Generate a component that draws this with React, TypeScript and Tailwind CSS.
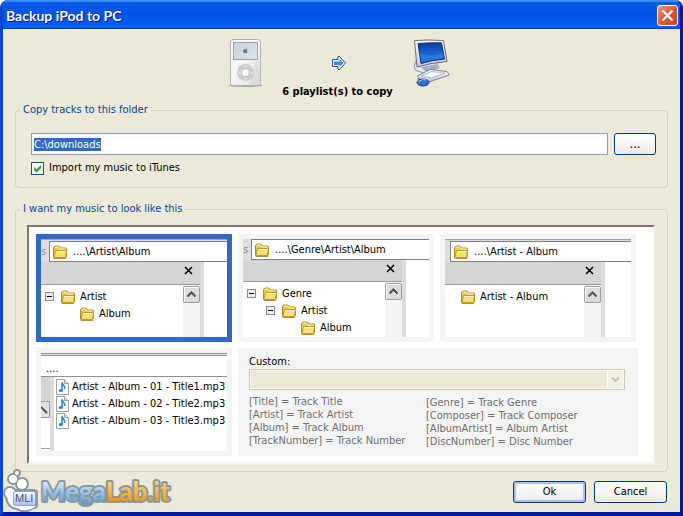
import { useEffect, useRef, useState } from "react";
import type { ReactNode } from "react";

const FolderIcon = () => (
  <svg width="16" height="14" viewBox="0 0 16 14" className="shrink-0">
    <path d="M1.500 12V2.500L3 1h4l1.500 2H14l.5 1v7.500L13 13H2.500z" fill="#efc84a" stroke="#b58a1c" />
    <path d="M2.500 3L3.500 2h3l1.500 2h5.500" fill="none" stroke="#fff3b0" />
    <path d="M3.500 5.500h11l-1 7H2z" fill="#fbe07a" stroke="#c79a25" />
    <path d="M4.500 6.500h9" stroke="#fffbd6" />
    <path d="M1.500 13.500h13" stroke="#8f6c17" opacity=".6" />
  </svg>
);

const IpodIcon = () => (
  <svg width="36" height="50" viewBox="0 0 36 50">
    <defs>
      <linearGradient id="ipodBody" x1="0" y1="0" x2="1" y2="1">
        <stop offset="0" stopColor="#ffffff" />
        <stop offset=".5" stopColor="#f4f4f4" />
        <stop offset="1" stopColor="#dcdcdc" />
      </linearGradient>
      <linearGradient id="ipodScreen" x1="0" y1="0" x2="1" y2="1">
        <stop offset="0" stopColor="#c6cfda" />
        <stop offset="1" stopColor="#dfe5ec" />
      </linearGradient>
    </defs>
    <ellipse cx="17.500" cy="47.500" rx="17" ry="1.500" fill="#a5a294" />
    <rect x="2.500" y="1.500" width="30" height="46" rx="2.500" fill="url(#ipodBody)" stroke="#b3b3b0" />
    <rect x="5.500" y="4.500" width="24" height="17" fill="url(#ipodScreen)" stroke="#98a3b2" />
    <path d="M17.500 11.500c.8-.5 1.600-.3 2 .3-.8.7-.7 1.700.2 2.100-.4 1.100-1.100 1.700-1.800 1.300-.4-.2-.7-.2-1.100 0-1.100.4-2.200-1.600-1.700-3 .4-.9 1.400-1.100 2.400-.7zM17.500 11c0-.8.5-1.400 1.200-1.500 0 .8-.5 1.400-1.200 1.500z" fill="#6c7a8c" />
    <path d="M28 22l4.500 10v15H21z" fill="#d0d0d0" opacity=".45" />
    <circle cx="17.500" cy="34.500" r="8.500" fill="#cbcbcb" />
    <rect x="14.500" y="31.500" width="6" height="6" rx="1.500" fill="#fff" />
    <path d="M10.500 33.500v2M12 33.500v2M23 33.500v2M24.500 33.500v2M16 28.500h3M16 40.500h3" stroke="#f0f0f0" />
  </svg>
);

const ArrowIcon = () => (
  <svg width="16" height="16" viewBox="0 0 16 16">
    <path d="M1.500 4.500H7V1.500h1.500l6 6.500-6 6.500H7v-3H1.500z" fill="#f2f8ff" stroke="#2b4a9e" />
    <path d="M3 6h5.500V4l4 4-4 4v-2H3z" fill="#3c8ae8" />
    <path d="M3 6.500h6.500" stroke="#8fc3ff" />
  </svg>
);

const ComputerIcon = () => (
  <svg width="40" height="50" viewBox="0 0 40 50" className="-ml-[2px]">
    <defs>
      <linearGradient id="pcScreen" x1="0" y1="0" x2="0" y2="1">
        <stop offset="0" stopColor="#0d3a94" />
        <stop offset=".55" stopColor="#1767d6" />
        <stop offset="1" stopColor="#0a44b0" />
      </linearGradient>
      <linearGradient id="pcCase" x1="0" y1="0" x2="0" y2="1">
        <stop offset="0" stopColor="#ffffff" />
        <stop offset="1" stopColor="#c3c8da" />
      </linearGradient>
    </defs>
    <path d="M4 23q-3.500 6 0 9.500l9 3 14-6-3-5z" fill="#dfe2ec" stroke="#8e94a8" />
    <path d="M9 29l17-3-1 4-11 4z" fill="#a6acc0" />
    <path d="M2.500 2.500Q17 1.500 31.500 2.500L35 23.500Q20 24.500 5 29z" fill="url(#pcCase)" stroke="#666c82" />
    <path d="M6 5.500Q18 4.500 29.500 4.800L32.500 21Q20 22 9 25.500z" fill="url(#pcScreen)" stroke="#1a3268" />
    <path d="M8 15q10 5 23 0l1 5.500Q20 21.500 9.500 24.500z" fill="#3fa0ff" opacity=".45" />
    <path d="M5.500 38l12.500-6.500 17 2 2.500 3.500L18 43.500 7 41z" fill="url(#pcCase)" stroke="#7a8096" />
    <path d="M9.500 38l10-4.500 14 1.500-14 5z" fill="#f4f6fb" stroke="#b4bacb" />
    <path d="M6 40q0 2 1 3" fill="none" stroke="#5c6aa0" />
    <ellipse cx="11" cy="44.500" rx="6" ry="3.500" fill="#2f6fd0" stroke="#1b3f8c" />
    <path d="M6.500 43.500q4-3 8-1.500" fill="none" stroke="#a9d0ff" />
  </svg>
);

const MusicFileIcon = () => (
  <svg width="13" height="16" viewBox="0 0 13 16" className="shrink-0">
    <path d="M.5.5h8l4 4v11H.5z" fill="#fdfdfd" stroke="#9aa0a6" />
    <path d="M8.500.5v4h4" fill="#dfe3e8" stroke="#9aa0a6" />
    <path d="M6 3.500v8" stroke="#1787c8" strokeWidth="1.500" />
    <path d="M6 3.500c.5 2.500 3.500 3 2.500 6.500" fill="none" stroke="#1787c8" strokeWidth="1.500" />
    <ellipse cx="4.800" cy="11.500" rx="2" ry="1.600" fill="#1787c8" />
  </svg>
);

const ExpanderIcon = () => (
  <svg width="9" height="9" viewBox="0 0 9 9" className="shrink-0">
    <rect x=".5" y=".5" width="8" height="8" fill="#ececec" stroke="#8c8c8c" />
    <path d="M2 4.500h5" stroke="#000" />
  </svg>
);

const ScrollUpIcon = () => (
  <svg width="17" height="17" viewBox="0 0 17 17" className="block">
    <rect x=".5" y=".5" width="16" height="16" rx="1.500" fill="#dcdcdc" stroke="#9e9e9e" />
    <path d="M1.500 15.500v-14h14" fill="none" stroke="#f8f8f8" />
    <path d="M4.500 10.500l4-4 4 4" fill="none" stroke="#4e5358" strokeWidth="2" />
  </svg>
);

const MegaLabLogo = () => (
  <svg width="180" height="46" viewBox="0 0 180 46" className="block">
    <defs>
      <linearGradient id="megaBlue" x1="0" y1="0" x2="0" y2="1">
        <stop offset=".2" stopColor="#d3eafb" />
        <stop offset=".9" stopColor="#5d9fd8" />
      </linearGradient>
      <linearGradient id="megaOrange" x1="0" y1="0" x2="0" y2="1">
        <stop offset=".2" stopColor="#ffd878" />
        <stop offset=".8" stopColor="#f39a17" />
      </linearGradient>
      <linearGradient id="megaBadge" x1="0" y1="0" x2="0" y2="1">
        <stop offset="0" stopColor="#ffffff" />
        <stop offset="1" stopColor="#a9bcf0" />
      </linearGradient>
    </defs>
    <g fill="#8a979e" stroke="#8a979e" strokeWidth="4" strokeLinejoin="round">
      <circle cx="16" cy="5" r="2" />
      <circle cx="12" cy="11" r="4" />
      <circle cx="21" cy="16" r="5" />
      <circle cx="9" cy="25" r="5" />
      <rect x="12" y="23" width="23" height="16" rx="2" />
      <path d="M6 28h26v11q-8 6-16 1-9-1-10-12z" />
    </g>
    <g fill="#fff">
      <circle cx="16" cy="5" r="2" />
      <circle cx="12" cy="11" r="4" />
      <circle cx="21" cy="16" r="5" />
      <circle cx="9" cy="25" r="5" />
      <path d="M6 28h28v11q-10 6-18 1-9-1-10-12z" />
    </g>
    <rect x="12.500" y="23.500" width="22" height="14" rx="2" fill="url(#megaBadge)" stroke="#8ba0e0" />
    <text x="14" y="34" fontFamily="'Liberation Sans', sans-serif" fontSize="11" fill="#46506e">
      MLI
    </text>
    <text
      x="40"
      y="33"
      fontFamily="Lato, sans-serif"
      fontWeight="700"
      fontSize="26"
      fill="url(#megaBlue)"
      stroke="#8a979e"
      strokeWidth="4"
      strokeLinejoin="round"
      paintOrder="stroke"
    >
      Mega<tspan fill="url(#megaOrange)">Lab.it</tspan>
    </text>
  </svg>
);

type TreeNode = { name: string; depth: number; open?: boolean };

type PreviewProps = {
  path: string;
  nodes: TreeNode[];
  narrow?: boolean;
  compact?: boolean;
};

// Small explorer window with an address bar and a folder tree
const FolderPreview = ({ path, nodes, narrow, compact }: PreviewProps) => (
  <div className="flex h-full flex-col overflow-hidden bg-white">
    <div
      className={`flex shrink-0 border-[#a5a5a5] bg-[#dedede] ${compact ? "h-[21px]" : "h-[23px] border-t pt-px"}`}
    >
      <div className={`flex items-center overflow-hidden text-[#8c8c8c] ${narrow ? "w-[5px]" : "w-2"}`}>
        {narrow ? "" : "s"}
      </div>
      <div className="flex flex-1 items-center gap-[5px] border-y border-l border-[#808080] bg-white pl-[2px]">
        <FolderIcon />
        <span>{path}</span>
      </div>
    </div>
    <div className="flex flex-1">
      <div className={`flex flex-col border-r-4 border-[#dcdcdc] ${narrow ? "w-[160px]" : "w-[163px]"}`}>
        <div
          className={`flex items-start justify-end border-b border-[#9a9a9a] bg-[#d5d5d5] pt-1 pr-[7px] ${
            compact ? "h-[22px]" : "h-[23px]"
          }`}
        >
          <svg width="9" height="9" viewBox="0 0 9 9">
            <path d="M1 1l7 7M8 1L1 8" stroke="#000" strokeWidth="1.500" />
          </svg>
        </div>
        <div className="flex flex-1">
          <ul className="flex-1 pt-[3px]">
            {nodes.map((node) => (
              <li
                key={node.name}
                className={`flex h-[17px] items-center gap-1 ${
                  node.depth === 0 ? "pl-1" : node.depth === 1 ? "pl-[23px]" : "pl-[42px]"
                } ${narrow ? "-ml-1" : ""}`}
              >
                <span className="mr-[2px] w-[9px] shrink-0">{node.open && <ExpanderIcon />}</span>
                <FolderIcon />
                <span className="whitespace-nowrap">{node.name}</span>
              </li>
            ))}
          </ul>
          <div className="w-[17px] bg-[#f3f3f3] pt-px">
            <ScrollUpIcon />
          </div>
        </div>
      </div>
    </div>
  </div>
);

const tracks = [
  "Artist - Album - 01 - Title1.mp3",
  "Artist - Album - 02 - Title2.mp3",
  "Artist - Album - 03 - Title3.mp3",
];

const FilePreview = () => (
  <div className="flex h-full flex-col overflow-hidden bg-white">
    <div className="h-[3px] border-y border-[#909090] bg-[#e4e4e4]" />
    <div className="flex h-[21px] items-end border-b border-[#909090] pl-[5px]">....</div>
    <div className="flex flex-1">
      <div className="w-[13px] border-r-4 border-[#dcdcdc]">
        <div className="h-6 bg-[#d5d5d5]" />
        <div className="flex h-[17px] items-center justify-end border border-l-0 border-[#9e9e9e] bg-[#e2e2e2]">
          <svg width="8" height="8" viewBox="0 0 8 8">
            <path d="M0 1l6 6" stroke="#4e5358" strokeWidth="2" />
          </svg>
        </div>
        <div className="h-[31px] border-b border-[#9e9e9e]" />
      </div>
      <ul className="pl-[2px] pt-px">
        {tracks.map((track) => (
          <li key={track} className="flex h-[17px] items-center gap-[3px] whitespace-nowrap">
            <MusicFileIcon />
            <span>{track}</span>
          </li>
        ))}
      </ul>
    </div>
  </div>
);

type TileProps = {
  selected: boolean;
  onSelect: () => void;
  className?: string;
  children: ReactNode;
};

const Tile = ({ selected, onSelect, className = "", children }: TileProps) => (
  <button
    type="button"
    aria-pressed={selected}
    onClick={onSelect}
    className={`block h-[108px] overflow-hidden border-[5px] text-left ${
      selected ? "border-[#316ac5]" : "border-[#f4f4f4]"
    } ${className}`}
  >
    {children}
  </button>
);

const previews: PreviewProps[] = [
  {
    path: "....\\Artist\\Album",
    nodes: [
      { name: "Artist", depth: 0, open: true },
      { name: "Album", depth: 1 },
    ],
  },
  {
    path: "....\\Genre\\Artist\\Album",
    compact: true,
    nodes: [
      { name: "Genre", depth: 0, open: true },
      { name: "Artist", depth: 1, open: true },
      { name: "Album", depth: 2 },
    ],
  },
  {
    path: "....\\Artist - Album",
    narrow: true,
    nodes: [{ name: "Artist - Album", depth: 0 }],
  },
];

const leftTags = [
  "[Title] = Track Title",
  "[Artist] = Track Artist",
  "[Album] = Track Album",
  "[TrackNumber] = Track Number",
];

const rightTags = [
  "[Genre] = Track Genre",
  "[Composer] = Track Composer",
  "[AlbumArtist] = Album Artist",
  "[DiscNumber] = Disc Number",
];

const xpButton =
  "h-[22px] rounded-[3px] border border-[#003c74] bg-linear-to-b from-white to-[#ecebe5] text-center";

export default function App() {
  const [selected, setSelected] = useState(0);
  const folderRef = useRef<HTMLInputElement>(null);

  useEffect(() => {
    folderRef.current?.focus();
    folderRef.current?.select();
  }, []);

  return (
    <div className="relative flex min-h-screen flex-col overflow-hidden rounded-t-lg border-x-[3px] border-b-4 border-t-0 border-l-[#0a45d8] border-r-[#0019a0] border-b-[#0019a0] bg-[#ece9d8] font-['DejaVu_Sans_Condensed','DejaVu_Sans',sans-serif] text-[11px] leading-[14px] text-black">
      <header className="-mx-[3px] flex h-[29px] items-center justify-between bg-linear-to-b from-[#0a5be8] via-[#0054e3] to-[#0062f8] pl-[6px] pr-[5px] pt-[2px] shadow-[inset_0_2px_1px_#3a8df8,inset_0_-1px_1px_#0040c0]">
        <h1 className="font-[Lato,'Open_Sans',sans-serif] text-[14px] font-bold text-white [text-shadow:1px_1px_#0f1089]">
          Backup iPod to PC
        </h1>
        <button
          type="button"
          aria-label="Close"
          className="flex h-[21px] w-[21px] items-center justify-center rounded-[3px] border border-white bg-linear-to-br from-[#f0967c] via-[#de5636] to-[#c8431f]"
        >
          <svg width="13" height="13" viewBox="0 0 13 13">
            <path d="M1.500 1.500l10 10M11.500 1.500l-10 10" stroke="#fff" strokeWidth="2.200" />
          </svg>
        </button>
      </header>

      <main className="flex flex-1 flex-col px-3 pt-[9px]">
        <div className="flex items-center justify-center gap-[67px] pr-1">
          <IpodIcon />
          <ArrowIcon />
          <ComputerIcon />
        </div>
        <p className="-mt-[3px] pr-2 text-center font-bold">6 playlist(s) to copy</p>

        <fieldset className="mt-1 rounded-[4px] border border-[#d0d0bf] px-1">
          <legend className="px-[3px] text-[#0046a0]">Copy tracks to this folder</legend>
          <div className="pt-4 pr-[7px] pb-[12px] pl-[11px]">
            <div className="flex gap-[6px]">
              <input
                ref={folderRef}
                type="text"
                aria-label="Folder"
                defaultValue={"C:\\downloads"}
                className="h-[22px] min-w-0 flex-1 border border-[#7f9db9] bg-white px-[2px] outline-none selection:bg-[#316ac5] selection:text-white"
              />
              <button type="button" className={`${xpButton} w-[42px] text-[13px]`}>
                ...
              </button>
            </div>
            <label className="mt-[6px] flex items-center gap-[5px]">
              <span className="grid">
                <input
                  type="checkbox"
                  defaultChecked
                  className="peer col-start-1 row-start-1 h-[13px] w-[13px] appearance-none border border-[#1c5180] bg-[#f6f6f3]"
                />
                <svg
                  width="13"
                  height="13"
                  viewBox="0 0 13 13"
                  className="pointer-events-none invisible col-start-1 row-start-1 peer-checked:visible"
                >
                  <path d="M3 5v3l2.500 2.500L10 6V3L5.500 7.500z" fill="#21a121" />
                </svg>
              </span>
              Import my music to iTunes
            </label>
          </div>
        </fieldset>

        <fieldset className="mt-[14px] rounded-[4px] border border-[#d0d0bf] px-1">
          <legend className="px-[3px] text-[#0046a0]">I want my music to look like this</legend>
          <div className="mr-2 mb-[7px] ml-[7px] mt-[9px] grid grid-cols-[196fr_196fr_198fr] gap-[6px] border-2 border-t-[#7b776c] border-l-[#7b776c] border-r-[#f6f4ec] border-b-[#f6f4ec] bg-white pt-[7px] pr-[15px] pb-[6px] pl-[7px]">
            {previews.map((preview, index) => (
              <Tile
                key={preview.path}
                selected={selected === index}
                onSelect={() => setSelected(index)}
                className={index === 2 ? "mr-[2px]" : ""}
              >
                <FolderPreview {...preview} />
              </Tile>
            ))}
            <Tile selected={selected === 3} onSelect={() => setSelected(3)}>
              <FilePreview />
            </Tile>
            <div className="col-span-2 bg-[#f4f4f4] pt-[7px] pr-[13px] pl-[11px]">
              <label htmlFor="custom">Custom:</label>
              <div className="flex h-[21px] items-center border border-[#c9c7ba] bg-[#ebe8d7] p-px shadow-[inset_0_0_0_1px_#f8f7f0]">
                <select
                  id="custom"
                  disabled
                  className="h-full min-w-0 flex-1 appearance-none bg-transparent"
                />
                <span className="flex h-[17px] w-[16px] items-center justify-center border-l border-white bg-[#f1efe4]">
                  <svg width="9" height="7" viewBox="0 0 9 7">
                    <path d="M1 1.500l3.500 3.500L8 1.500" fill="none" stroke="#c2c0b2" strokeWidth="2" />
                  </svg>
                </span>
              </div>
              <div className="mt-[5px] grid grid-cols-[177fr_199fr] leading-[13px] text-[#6e6e6e]">
                <ul>
                  {leftTags.map((tag) => (
                    <li key={tag}>{tag}</li>
                  ))}
                </ul>
                <ul className="pt-px">
                  {rightTags.map((tag) => (
                    <li key={tag}>{tag}</li>
                  ))}
                </ul>
              </div>
            </div>
          </div>
        </fieldset>

        <div className="mt-[9px] flex justify-end gap-2 pr-px pb-[9px]">
          <button type="button" className={`${xpButton} w-[73px] shadow-[inset_0_0_0_2px_#a9c3f0]`}>
            Ok
          </button>
          <button type="button" className={`${xpButton} w-[73px]`}>
            Cancel
          </button>
        </div>
      </main>

      <div className="pointer-events-none absolute -bottom-[2px] -left-[2px]">
        <MegaLabLogo />
      </div>
    </div>
  );
}
